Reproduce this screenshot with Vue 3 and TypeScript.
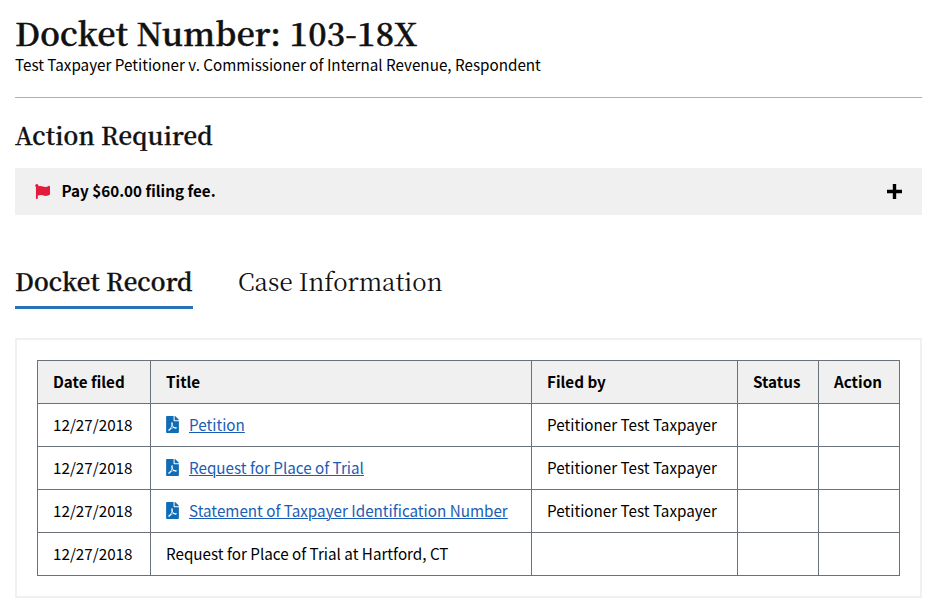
<script setup lang="ts">
interface DocketEntry {
  date: string
  title: string
  filedBy: string
  hasDocument: boolean
}

const entries: DocketEntry[] = [
  { date: '12/27/2018', title: 'Petition', filedBy: 'Petitioner Test Taxpayer', hasDocument: true },
  { date: '12/27/2018', title: 'Request for Place of Trial', filedBy: 'Petitioner Test Taxpayer', hasDocument: true },
  { date: '12/27/2018', title: 'Statement of Taxpayer Identification Number', filedBy: 'Petitioner Test Taxpayer', hasDocument: true },
  { date: '12/27/2018', title: 'Request for Place of Trial at Hartford, CT', filedBy: '', hasDocument: false },
]
</script>

<template>
  <main class="page">
    <header class="case-header">
      <h1>Docket Number: 103-18X</h1>
      <p>Test Taxpayer Petitioner v. Commissioner of Internal Revenue, Respondent</p>
    </header>

    <section class="actions">
      <h2>Action Required</h2>
      <button class="action-bar" type="button">
        <svg class="flag" viewBox="0 0 512 512">
          <path d="M349.565 98.783C295.978 98.783 251.721 64 184.348 64c-24.955 0-47.309 4.384-68.045 12.013a55.947 55.947 0 0 0 3.586-23.562C118.117 24.015 94.806 1.206 66.338.048 34.345-1.254 8 24.296 8 56c0 19.026 9.497 35.825 24 45.945V488c0 13.255 10.745 24 24 24h16c13.255 0 24-10.745 24-24v-94.4c28.311-12.064 63.582-22.122 114.435-22.122 53.588 0 97.844 34.783 165.217 34.783 48.169 0 86.667-16.294 122.505-40.858C506.84 359.452 512 349.571 512 339.045v-243.1c0-23.393-24.269-38.87-45.485-29.016-34.338 15.948-76.454 31.854-116.95 31.854z" />
        </svg>
        <span class="action-text">Pay $60.00 filing fee.</span>
        <svg class="plus" viewBox="0 0 15 15"><path d="M7.5 0v15M0 7.5h15" /></svg>
      </button>
    </section>

    <nav class="tabs">
      <a class="tab active">Docket Record</a>
      <a class="tab">Case Information</a>
    </nav>

    <section class="panel">
      <table>
        <colgroup>
          <col class="c-date" /><col class="c-title" /><col class="c-filed" /><col class="c-status" /><col class="c-action" />
        </colgroup>
        <thead>
          <tr><th>Date filed</th><th>Title</th><th>Filed by</th><th>Status</th><th>Action</th></tr>
        </thead>
        <tbody>
          <tr v-for="entry in entries" :key="entry.title">
            <td>{{ entry.date }}</td>
            <td>
              <div v-if="entry.hasDocument" class="document">
                <svg class="pdf" viewBox="0 0 384 512">
                  <path d="M181.9 256.1c-5-16-4.9-46.9-2-46.9 8.4 0 7.6 36.9 2 46.9zm-1.7 47.2c-7.7 20.2-17.3 43.3-28.4 62.7 18.3-7 39-17.2 62.9-21.9-12.7-9.6-24.9-23.4-34.5-40.8zM86.1 428.1c0 .8 13.2-5.4 34.9-40.2-6.7 6.3-29.1 24.5-34.9 40.2zM248 160h136v328c0 13.3-10.7 24-24 24H24c-13.3 0-24-10.7-24-24V24C0 10.7 10.7 0 24 0h200v136c0 13.2 10.8 24 24 24zm-8 171.8c-20-12.2-33.3-29-42.7-53.8 4.5-18.5 11.6-46.6 6.2-64.2-4.7-29.4-42.4-26.5-47.8-6.8-5 18.3-.4 44.1 8.1 77-11.6 27.6-28.7 64.6-40.8 85.8-.1 0-.1.1-.2.1-27.1 13.9-73.6 44.5-54.5 68 5.6 6.9 16 10 21.5 10 17.9 0 35.7-18 61.1-61.8 25.8-8.5 54.1-19.1 79-23.2 21.7 11.8 47.1 19.5 64 19.5 29.2 0 31.2-32 19.7-43.4-13.9-13.6-54.3-9.7-73.6-7.2zM377 105L279 7c-4.5-4.5-10.6-7-17-7h-6v128h128v-6.1c0-6.3-2.5-12.4-7-16.9zm-74.1 255.3c4.1-2.7-2.5-11.9-42.8-9 37.1 15.8 42.8 9 42.8 9z" />
                </svg>
                <a>{{ entry.title }}</a>
              </div>
              <template v-else>{{ entry.title }}</template>
            </td>
            <td>{{ entry.filedBy }}</td>
            <td></td>
            <td></td>
          </tr>
        </tbody>
      </table>
    </section>
  </main>
</template>

<style>
body {
  margin: 0;
  background: #fff;
}
</style>

<style scoped>
.page {
  box-sizing: border-box;
  width: 936px;
  height: 608px;
  padding: 14px 14px 0 15px;
  color: #000;
  font-family: "Noto Sans CJK SC", "Noto Sans", sans-serif;
  font-size: 15.23px;
}
h1, h2, p {
  margin: 0;
}
h1, h2, .tab {
  color: #111;
  font-family: "Source Serif Pro", "Noto Serif CJK SC", "Liberation Serif", serif;
}
.case-header {
  height: 83px;
  border-bottom: 1px solid #aeb0b5;
}
h1 {
  height: 38px;
  font-size: 32px;
  font-weight: 600;
  line-height: 36px;
  letter-spacing: 0.25px;
  -webkit-text-stroke: 0.5px #111;
}
.case-header p {
  line-height: 24px;
}
.actions {
  padding-top: 22px;
}
h2 {
  height: 32px;
  margin-bottom: 16px;
  font-size: 24px;
  font-weight: 600;
  line-height: 30px;
  letter-spacing: 0.18px;
  -webkit-text-stroke: 0.35px #111;
}
.action-bar {
  display: flex;
  align-items: center;
  width: 907px;
  height: 47px;
  padding: 0 20px;
  border: 0;
  background: #f0f0f0;
  color: #000;
  font: inherit;
  font-weight: 700;
}
.flag {
  width: 15px;
  height: 15px;
  fill: #e31c3d;
}
.action-text {
  margin-left: 11.5px;
  padding-bottom: 3px;
}
.plus {
  width: 15px;
  height: 15px;
  margin-left: auto;
  fill: none;
  stroke: #000;
  stroke-width: 3.4;
}
.tabs {
  display: flex;
  gap: 45px;
  margin-top: 51px;
}
.tab {
  box-sizing: border-box;
  height: 43px;
  font-size: 24.05px;
  line-height: 30px;
  white-space: nowrap;
}
.tab.active {
  width: 178px;
  border-bottom: 3px solid #2672bb;
  font-weight: 600;
  letter-spacing: 0.16px;
  -webkit-text-stroke: 0.35px #111;
}
.panel {
  box-sizing: border-box;
  width: 907px;
  height: 260px;
  margin-top: 29px;
  padding: 20px;
  border: 2px solid #f0f0f0;
}
table {
  width: 863px;
  border-collapse: collapse;
  table-layout: fixed;
}
.c-date { width: 113px; }
.c-title { width: 381px; }
.c-filed { width: 206px; }
.c-status { width: 81px; }
.c-action { width: 81px; }
th, td {
  box-sizing: border-box;
  height: 43px;
  padding: 0 15px 2px;
  border: 1px solid #6b717b;
  line-height: 24px;
  text-align: left;
  white-space: nowrap;
}
th {
  background: #f0f0f0;
  font-weight: 700;
}
.document {
  display: flex;
  align-items: center;
}
.pdf {
  width: 13px;
  height: 17px;
  margin-right: 10px;
  fill: #0f6cb6;
}
.document a {
  color: #1a5db4;
  text-decoration: underline;
  text-decoration-thickness: 1px;
  text-underline-offset: 1px;
}
</style>
